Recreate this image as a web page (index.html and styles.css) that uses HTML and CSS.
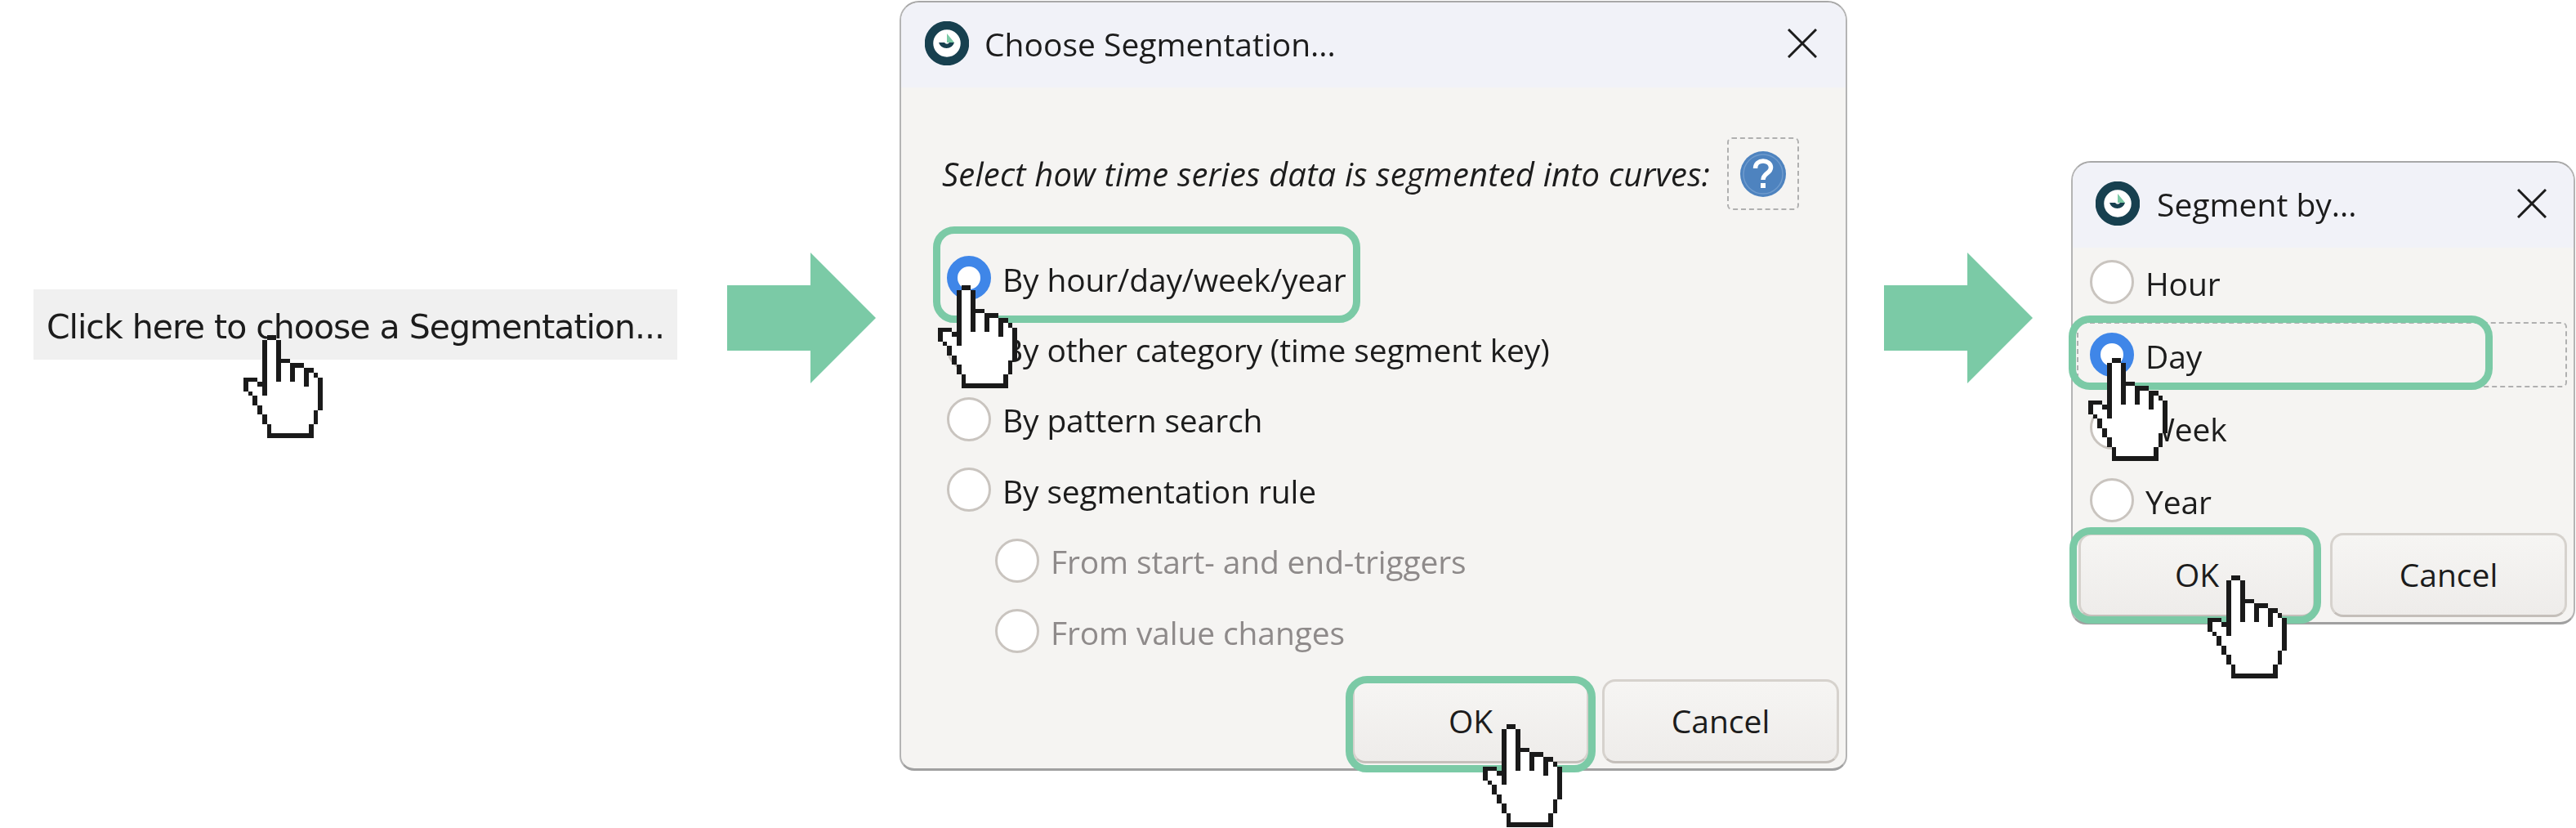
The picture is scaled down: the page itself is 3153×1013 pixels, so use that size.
FILE: index.html
```html
<!DOCTYPE html>
<html lang="en">
<head>
<meta charset="utf-8">
<title>Choose Segmentation</title>
<link rel="stylesheet" href="styles.css">
</head>
<body>
<svg class="defs" width="0" height="0" aria-hidden="true">
  <symbol id="hand" viewBox="0 0 17 22" shape-rendering="crispEdges">
    <path fill="#fff" d="M5 0h2v5h3v1h3v1h2v1h1v8h-1v3h-1v3H5v-3H4v-2H3v-2H2v-2H1v-1H0V9h3v1h1V1h1z"/>
    <path fill="#1a1a1a" d="M5 0h2v1H5zM4 1h1v12H4zM7 1h1v9H7zM8 5h2v1H8zM10 6h3v1h-3zM10 7h1v3h-1zM13 7h2v1h-2zM13 8h1v3h-1zM15 8h1v1h-1zM16 9h1v7h-1zM15 16h1v3h-1zM14 19h1v3h-1zM5 21h9v1H5zM5 19h1v2H5zM4 17h1v2H4zM3 15h1v2H3zM2 13h1v2H2zM1 12h1v1H1zM0 9h1v3H0zM1 9h2v1H1zM3 10h1v1H3z"/>
  </symbol>
  <symbol id="logo" viewBox="0 0 54 54">
    <circle cx="27" cy="27" r="22" fill="#fff" stroke="#17404f" stroke-width="10.5"/>
    <path fill="#7bcaa6" d="M27 15l9 11H27z"/>
    <path fill="#17404f" d="M17 26h7a3.500 3.500 0 0 0 6 0h6a10 10 0 0 1-19 0z"/>
  </symbol>
  <symbol id="close" viewBox="0 0 36 36">
    <path fill="none" stroke="#1c1c1c" stroke-width="3" d="M1 1l34 34M35 1L1 35"/>
  </symbol>
  <symbol id="help" viewBox="0 0 56 56">
    <circle cx="28" cy="28" r="28" fill="#4e83bf"/>
    <circle cx="28" cy="28" r="24" fill="none" stroke="#6f9bcd" stroke-width="1.500"/>
    <path fill="none" stroke="#fff" stroke-width="5.500" d="M18.500 21c0-6 4.500-9 9.500-9s9.500 3 9.500 8c0 7-9.500 7-9.500 15"/>
    <path fill="#fff" d="M25 39h6v6h-6z"/>
  </symbol>
</svg>

<main class="canvas">
  <div class="start-button">Click here to choose a Segmentation...</div>

  <svg class="arrow arrow-1" viewBox="0 0 182 160"><path fill="#7bcaa6" d="M0 40h102V0l80 80-80 80v-40H0z"/></svg>
  <svg class="arrow arrow-2" viewBox="0 0 182 160"><path fill="#7bcaa6" d="M0 40h102V0l80 80-80 80v-40H0z"/></svg>

  <section class="dialog dialog-large">
    <header class="titlebar">
      <svg class="logo"><use href="#logo"/></svg>
      <span class="title">Choose Segmentation...</span>
      <svg class="close"><use href="#close"/></svg>
    </header>
    <div class="body">
      <div class="prompt-row">
        <span class="prompt">Select how time series data is segmented into curves:</span>
        <span class="help-box"><svg class="help"><use href="#help"/></svg></span>
      </div>
      <div class="options">
        <div class="option"><span class="radio checked"></span><span class="label">By hour/day/week/year</span></div>
        <div class="option"><span class="radio"></span><span class="label">By other category (time segment key)</span></div>
        <div class="option"><span class="radio"></span><span class="label">By pattern search</span></div>
        <div class="option"><span class="radio"></span><span class="label">By segmentation rule</span></div>
        <div class="option sub disabled"><span class="radio"></span><span class="label">From start- and end-triggers</span></div>
        <div class="option sub disabled"><span class="radio"></span><span class="label">From value changes</span></div>
      </div>
      <div class="actions">
        <button class="btn">OK</button>
        <button class="btn">Cancel</button>
      </div>
    </div>
  </section>

  <section class="dialog dialog-small">
    <header class="titlebar">
      <svg class="logo"><use href="#logo"/></svg>
      <span class="title">Segment by...</span>
      <svg class="close"><use href="#close"/></svg>
    </header>
    <div class="body">
      <div class="options">
        <div class="option"><span class="radio"></span><span class="label">Hour</span></div>
        <div class="option focused"><span class="radio checked"></span><span class="label">Day</span></div>
        <div class="option"><span class="radio"></span><span class="label">Week</span></div>
        <div class="option"><span class="radio"></span><span class="label">Year</span></div>
      </div>
      <div class="actions">
        <button class="btn">OK</button>
        <button class="btn">Cancel</button>
      </div>
    </div>
  </section>

  <div class="mark mark-1"></div>
  <div class="mark mark-2"></div>
  <div class="mark mark-3"></div>
  <div class="mark mark-4"></div>

  <svg class="hand hand-1"><use href="#hand"/></svg>
  <svg class="hand hand-2"><use href="#hand"/></svg>
  <svg class="hand hand-3"><use href="#hand"/></svg>
  <svg class="hand hand-4"><use href="#hand"/></svg>
  <svg class="hand hand-5"><use href="#hand"/></svg>
</main>
</body>
</html>
```

FILE: styles.css
```css
* { box-sizing: border-box; }
html, body { margin: 0; padding: 0; background: #fff; }
.defs { position: absolute; }
.canvas {
  position: relative;
  width: 3153px;
  height: 1013px;
  overflow: hidden;
  background: #fff;
  font-family: "Open Sans", "Noto Sans", sans-serif;
  color: #1c1c1c;
}
.start-button {
  position: absolute;
  left: 41px;
  top: 354px;
  width: 788px;
  height: 86px;
  display: flex;
  align-items: center;
  justify-content: center;
  padding-top: 5px;
  background: #f0f0f0;
  font-family: "DejaVu Sans", sans-serif;
  font-size: 41px;
  letter-spacing: -1px;
  filter: blur(.5px);
}
.arrow { position: absolute; top: 309px; width: 182px; height: 160px; }
.arrow-1 { left: 890px; }
.arrow-2 { left: 2306px; }

.dialog {
  position: absolute;
  display: flex;
  flex-direction: column;
  background: #f5f4f2;
  border: 2px solid #b4b4b4;
  border-top-color: #a8a8a8;
  border-bottom: 3px solid #a0a0a0;
  border-radius: 24px 24px 18px 18px;
  overflow: hidden;
}
.dialog-large { left: 1101px; top: 1px; width: 1160px; height: 942px; }
.dialog-small { left: 2535px; top: 197px; width: 617px; height: 567px; }

.titlebar {
  flex: none;
  display: flex;
  align-items: center;
  background: #f1f2f8;
}
.dialog-large .titlebar { height: 104px; padding: 0 35px 4px 29px; gap: 19px; }
.dialog-small .titlebar { height: 104px; padding: 0 33px 4px 28px; gap: 21px; }
.logo { width: 54px; height: 54px; flex: none; }
.title { flex: 1; font-size: 39px; letter-spacing: 0; filter: blur(.5px); }
.close { width: 36px; height: 36px; flex: none; filter: blur(.4px); }

.body { flex: 1; display: flex; flex-direction: column; min-height: 0; }
.dialog-large .body { padding: 61px 8px 6px 0; }
.dialog-small .body { padding: 2px 8px 6px 0; }

.prompt-row {
  display: flex;
  align-items: center;
  justify-content: space-between;
  height: 89px;
  margin: 0 49px 40px 50px;
}
.prompt { font-size: 40px; font-style: italic; letter-spacing: .2px; filter: blur(.5px); }
.help-box {
  display: flex;
  align-items: center;
  justify-content: center;
  width: 88px;
  height: 89px;
  border: 2px dashed #b0b0b0;
  border-radius: 6px;
}
.help { width: 56px; height: 56px; filter: blur(.4px); }

.options { display: flex; flex-direction: column; }
.dialog-small .options { gap: 9px; }
.option { display: flex; align-items: center; gap: 14px; height: 86.400px; padding-left: 56px; }
.dialog-small .option { height: 80px; margin-left: 5px; padding-left: 16px; }
.option.sub { padding-left: 115px; }
.option.focused { outline: 2px dashed #b0b0b0; outline-offset: -2px; border-radius: 6px; }
.option.disabled { color: #8e8a8a; }
.label { font-size: 39px; letter-spacing: -.15px; line-height: 1; padding-top: 2px; filter: blur(.5px); }

.radio {
  flex: none;
  width: 54px;
  height: 54px;
  border-radius: 50%;
  background: #fff;
  border: 3px solid #c9c4bf;
}
.radio.checked { border: 13px solid #3f86e8; }

.actions {
  margin-top: auto;
  display: flex;
  justify-content: flex-end;
  gap: 16px;
}
.btn {
  width: 290px;
  height: 103px;
  padding: 0 0 3px;
  background: linear-gradient(#f6f5f3, #eeecea);
  border: 3px solid #d6d2cd;
  border-bottom-color: #c4bfba;
  border-radius: 16px;
  color: #1c1c1c;
  font-family: inherit;
  font-size: 39px;
}
.dialog-small .actions { gap: 18px; }

.mark {
  position: absolute;
  border: 9px solid #7bcaa6;
  border-radius: 26px;
}
.mark-1 { left: 1142px; top: 277px; width: 523px; height: 118px; }
.mark-2 { left: 1647px; top: 827px; width: 306px; height: 118px; }
.mark-3 { left: 2532px; top: 386px; width: 519px; height: 91px; }
.mark-4 { left: 2533px; top: 645px; width: 308px; height: 118px; }

.hand { position: absolute; width: 97px; height: 126px; }
.hand-1 { left: 298px; top: 410px; }
.hand-2 { left: 1148px; top: 349px; }
.hand-3 { left: 1815px; top: 886px; }
.hand-4 { left: 2556px; top: 438px; }
.hand-5 { left: 2702px; top: 704px; }
```
